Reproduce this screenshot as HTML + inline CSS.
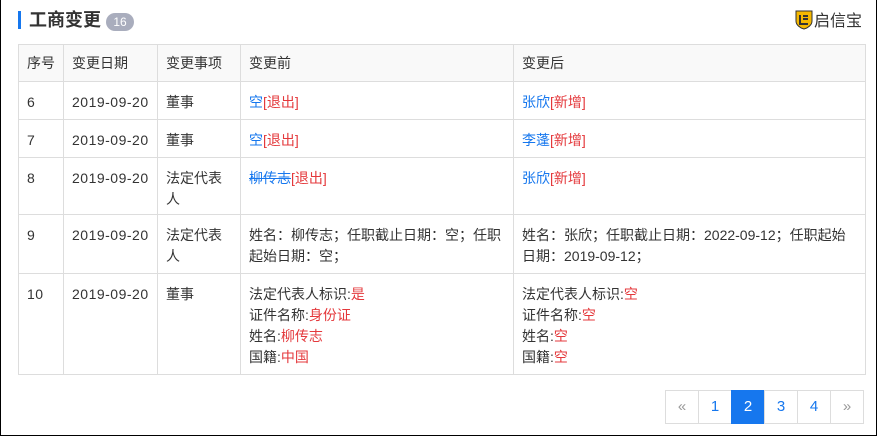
<!DOCTYPE html>
<html><head><meta charset="utf-8"><style>
html,body{margin:0;padding:0;}
body{width:877px;height:436px;box-sizing:border-box;border:1px solid #000;border-top:none;background:#fff;position:relative;overflow:hidden;font-family:"Liberation Sans","Noto Sans CJK SC",sans-serif;font-size:14px;color:#333;}
.bar{position:absolute;left:17px;top:11px;width:3px;height:18px;background:#1677ee;}
.title{position:absolute;left:28px;top:8px;font-size:18px;font-weight:bold;color:#333;line-height:24px;}
.badge{position:absolute;left:105px;top:13px;width:28px;height:18px;border-radius:9px;background:#a9adbd;color:#fff;font-size:12px;line-height:18px;text-align:center;}
.logo{position:absolute;left:794px;top:10px;font-size:16px;color:#333;line-height:22px;}
.logo svg{vertical-align:-4px;margin-right:1px}
table{position:absolute;left:17px;top:44px;border-collapse:collapse;table-layout:fixed;width:847px;}
td,th{border:1px solid #ddd;padding:10px 8px 0 8px;vertical-align:top;line-height:21px;text-align:left;font-weight:normal;white-space:nowrap;overflow:hidden;}
th{background:#f9f9f9;padding-top:8px;}
.n{letter-spacing:0.5px}
.b{color:#1677ee}.r{color:#e4393c}
.pg{position:absolute;left:665px;top:390px;display:flex;}
.pg div{width:32px;height:32px;border:1px solid #ddd;margin-left:-1px;line-height:32px;text-align:center;color:#1677ee;font-size:15px;}
.pg div.a{background:#1677ee;color:#fff;border-color:#1677ee}
.pg div.g{color:#999;}
</style></head><body>
<div class="bar"></div>
<div class="title">工商变更</div>
<div class="badge">16</div>
<div class="logo"><svg width="18" height="20" viewBox="0 0 18 20"><path d="M1 1h16v10c0 4-4 7-8 8-4-1-8-4-8-8z" fill="#f5b800" stroke="#333" stroke-width="1"/><path d="M5 5v9h8M8 6h5M8 9h5" stroke="#333" stroke-width="2" fill="none"/></svg>启信宝</div>
<table>
<colgroup><col style="width:45px"><col style="width:94px"><col style="width:83px"><col style="width:273px"><col style="width:352px"></colgroup>
<tr style="height:37px"><th>序号</th><th>变更日期</th><th>变更事项</th><th>变更前</th><th>变更后</th></tr>
<tr style="height:38px"><td class="n">6</td><td class="n">2019-09-20</td><td>董事</td><td><span class="b">空</span><span class="r">[退出]</span></td><td><span class="b">张欣</span><span class="r">[新增]</span></td></tr>
<tr style="height:38px"><td class="n">7</td><td class="n">2019-09-20</td><td>董事</td><td><span class="b">空</span><span class="r">[退出]</span></td><td><span class="b">李蓬</span><span class="r">[新增]</span></td></tr>
<tr style="height:57px"><td class="n">8</td><td class="n">2019-09-20</td><td>法定代表<br>人</td><td><span class="b" style="text-decoration:line-through">柳传志</span><span class="r">[退出]</span></td><td><span class="b">张欣</span><span class="r">[新增]</span></td></tr>
<tr style="height:59px"><td class="n">9</td><td class="n">2019-09-20</td><td>法定代表<br>人</td><td>姓名：柳传志；任职截止日期：空；任职<br>起始日期：空；</td><td>姓名：张欣；任职截止日期：2022-09-12；任职起始<br>日期：2019-09-12；</td></tr>
<tr style="height:101px"><td class="n">10</td><td class="n">2019-09-20</td><td>董事</td><td>法定代表人标识:<span class="r">是</span><br>证件名称:<span class="r">身份证</span><br>姓名:<span class="r">柳传志</span><br>国籍:<span class="r">中国</span></td><td>法定代表人标识:<span class="r">空</span><br>证件名称:<span class="r">空</span><br>姓名:<span class="r">空</span><br>国籍:<span class="r">空</span></td></tr>
</table>
<div class="pg"><div class="g">«</div><div>1</div><div class="a">2</div><div>3</div><div>4</div><div class="g">»</div></div>
</body></html>
